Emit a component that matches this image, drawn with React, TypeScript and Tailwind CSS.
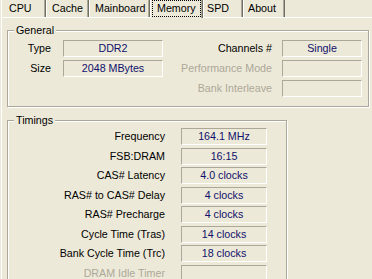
import React from 'react';

const FONT = "font-['Liberation_Sans',Arial,sans-serif] text-[10.7px] leading-[13px]";

const tabs = [
  { label: 'CPU', w: 'w-[45px]', pl: 'pl-[7px]' },
  { label: 'Cache', w: 'w-[43px]', pl: 'pl-[5px]' },
  { label: 'Mainboard', w: 'w-[61px]', pl: 'pl-[5px]' },
  { label: 'Memory', w: 'w-[53px]', pl: '', active: true },
  { label: 'SPD', w: 'w-[40px]', pl: 'pl-[3px]' },
  { label: 'About', w: 'w-[42px]', pl: 'pl-[4px]' },
];

function Tabs() {
  return (
    <div className="flex h-[17px] items-start pl-[1px]">
      {tabs.map((t) =>
        t.active ? (
          <div
            key={t.label}
            className={`relative z-10 flex h-[18px] ${t.w} border-l border-r border-l-white border-r-[#716f64] bg-[#ece9d8] px-[1px] shadow-[inset_-1px_0_0_#aca899]`}
          >
            <span className="flex h-[17px] w-[49px] items-center border border-dotted border-black pl-[4px] text-black">
              {t.label}
            </span>
          </div>
        ) : (
          <div
            key={t.label}
            className={`flex h-[17px] ${t.w} ${t.pl} items-center border-l border-r border-l-white border-r-[#716f64] text-black shadow-[inset_-1px_0_0_#aca899]`}
          >
            {t.label}
          </div>
        ),
      )}
    </div>
  );
}

function Field({ value, w }: { value?: string; w: string }) {
  return (
    <div
      className={`flex h-[17px] ${w} items-center justify-center border border-t-[#aca899] border-l-[#aca899] border-b-white border-r-white text-[#10106c]`}
    >
      {value}
    </div>
  );
}

function Group({
  title,
  className,
  children,
}: {
  title: string;
  className: string;
  children: React.ReactNode;
}) {
  return (
    <div
      className={`relative ml-[5px] border border-[#aca899] shadow-[inset_1px_1px_0_#fff,1px_1px_0_#fff] ${className}`}
    >
      <span className="absolute -top-[7px] left-[6px] bg-[#ece9d8] px-[2px] text-black">
        {title}
      </span>
      {children}
    </div>
  );
}

type Row = { label: string; value?: string; off?: boolean };

const general: Row[] = [
  { label: 'Type', value: 'DDR2' },
  { label: 'Size', value: '2048 MBytes' },
];

const generalRight: Row[] = [
  { label: 'Channels #', value: 'Single' },
  { label: 'Performance Mode', off: true },
  { label: 'Bank Interleave', off: true },
];

const timings: Row[] = [
  { label: 'Frequency', value: '164.1 MHz' },
  { label: 'FSB:DRAM', value: '16:15' },
  { label: 'CAS# Latency', value: '4.0 clocks' },
  { label: 'RAS# to CAS# Delay', value: '4 clocks' },
  { label: 'RAS# Precharge', value: '4 clocks' },
  { label: 'Cycle Time (Tras)', value: '14 clocks' },
  { label: 'Bank Cycle Time (Trc)', value: '18 clocks' },
  { label: 'DRAM Idle Timer', off: true },
];

export default function App() {
  return (
    <div className={`h-[279px] w-[372px] overflow-hidden bg-[#ece9d8] ${FONT}`}>
      <Tabs />
      <div className="ml-[1px] h-[262px] border-l border-t border-white">
        <Group title="General" className="mt-[12px] h-[77px] w-[362px]">
          <div className="flex pt-[9px]">
            <div className="flex flex-col gap-[3px]">
              {general.map((r) => (
                <div key={r.label} className="flex items-center">
                  <span className="w-[43px] text-right text-black">{r.label}</span>
                  <div className="ml-[12px]">
                    <Field value={r.value} w="w-[100px]" />
                  </div>
                </div>
              ))}
            </div>
            <div className="flex flex-col gap-[3px]">
              {generalRight.map((r) => (
                <div key={r.label} className="flex items-center">
                  <span
                    className={`w-[109px] whitespace-nowrap text-right ${r.off ? 'text-[#aca899]' : 'text-black'}`}
                  >
                    {r.label}
                  </span>
                  <div className="ml-[10px]">
                    <Field value={r.value} w="w-[80px]" />
                  </div>
                </div>
              ))}
            </div>
          </div>
        </Group>

        <Group title="Timings" className="mt-[13px] h-[180px] w-[280px]">
          <div className="flex flex-col gap-[2.5px] pt-[7px]">
            {timings.map((r) => (
              <div key={r.label} className="flex items-center">
                <span
                  className={`w-[157px] text-right ${r.off ? 'text-[#aca899]' : 'text-black'}`}
                >
                  {r.label}
                </span>
                <div className="ml-[16px]">
                  <Field value={r.value} w="w-[86px]" />
                </div>
              </div>
            ))}
          </div>
        </Group>
      </div>
    </div>
  );
}
